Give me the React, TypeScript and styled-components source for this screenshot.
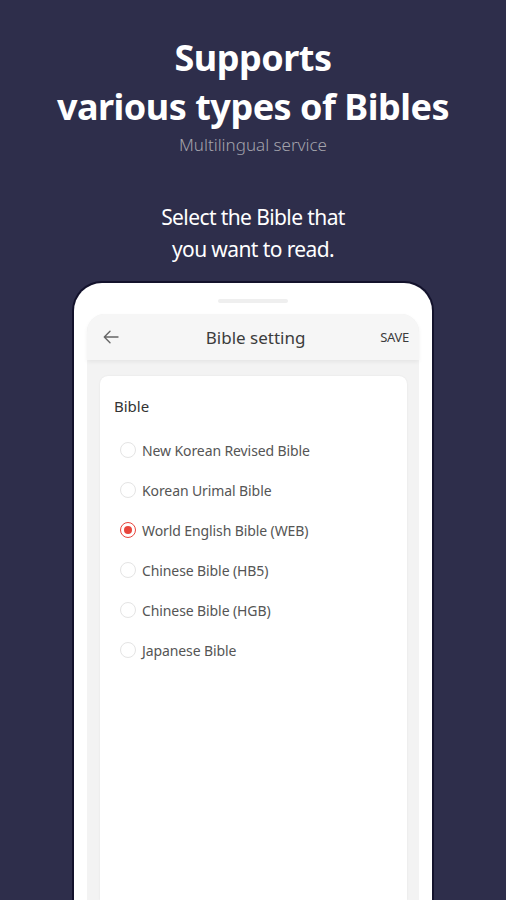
import React from 'react';
import styled, { createGlobalStyle } from 'styled-components';

const GlobalStyle = createGlobalStyle`
  html, body {
    margin: 0;
    padding: 0;
    background: #2e2e4b;
  }
  * {
    box-sizing: border-box;
  }
`;

const Page = styled.div`
  width: 506px;
  height: 900px;
  overflow: hidden;
  background: #2e2e4b;
  font-family: 'Noto Sans', 'Open Sans', sans-serif;
  display: flex;
  flex-direction: column;
  align-items: center;
`;

const Title = styled.h1`
  margin: 33px 0 0;
  font-size: 36px;
  font-weight: 700;
  line-height: 49px;
  color: #ffffff;
  text-align: center;
  letter-spacing: -0.5px;
`;

const Subtitle = styled.div`
  margin-top: 2px;
  font-size: 17px;
  font-weight: 300;
  color: #a3a3ab;
  line-height: 24px;
`;

const Caption = styled.p`
  margin: 44px 0 0;
  font-size: 21px;
  line-height: 32px;
  color: #ffffff;
  text-align: center;
  letter-spacing: -0.6px;
`;

const Phone = styled.div`
  margin-top: 16px;
  width: 362px;
  flex: 1;
  background: #ffffff;
  border: 2px solid #13122c;
  border-bottom: none;
  border-radius: 30px 30px 0 0;
  padding: 16px 13px 0;
  display: flex;
  flex-direction: column;
`;

const Speaker = styled.div`
  align-self: center;
  width: 70px;
  height: 4px;
  border-radius: 2px;
  background: #efefef;
`;

const Screen = styled.div`
  margin-top: 11px;
  flex: 1;
  background: #f3f3f3;
  border-radius: 18px 18px 0 0;
  display: flex;
  flex-direction: column;
`;

const Header = styled.div`
  height: 46px;
  display: flex;
  align-items: center;
  padding: 0 10px 0 14px;
  background: #f6f6f6;
  border-radius: 18px 18px 0 0;
  box-shadow: 0 2px 4px rgba(0, 0, 0, 0.06);
  position: relative;
  z-index: 1;
`;

const BackButton = styled.div`
  width: 20px;
  height: 20px;
  display: flex;
  align-items: center;
  justify-content: center;
`;

const HeaderTitle = styled.div`
  flex: 1;
  text-align: center;
  font-size: 17px;
  color: #3c3c3c;
  padding-left: 10px;
`;

const SaveButton = styled.div`
  font-size: 13px;
  color: #3c3c3c;
  letter-spacing: -0.3px;
`;

const Body = styled.div`
  flex: 1;
  padding: 16px 12px 0 13px;
  display: flex;
  flex-direction: column;
`;

const Card = styled.div`
  flex: 1;
  background: #ffffff;
  border-radius: 8px 8px 0 0;
  box-shadow: 0 0 2px rgba(0, 0, 0, 0.08);
  padding: 18px 14px 0;
`;

const SectionLabel = styled.div`
  font-size: 15px;
  color: #333333;
  line-height: 24px;
  margin-bottom: 12px;
`;

const OptionList = styled.div`
  display: flex;
  flex-direction: column;
  padding-left: 6px;
`;

const Option = styled.label`
  height: 40px;
  display: flex;
  align-items: center;
  gap: 6px;
  font-size: 14px;
  color: #555555;
  letter-spacing: -0.1px;
`;

const Radio = styled.span<{ $checked: boolean }>`
  width: 16px;
  height: 16px;
  border-radius: 50%;
  border: 1.5px solid ${(p) => (p.$checked ? '#e8453c' : '#e4e4e4')};
  display: flex;
  align-items: center;
  justify-content: center;

  &::after {
    content: '';
    width: 8px;
    height: 8px;
    border-radius: 50%;
    background: ${(p) => (p.$checked ? '#e8453c' : 'transparent')};
  }
`;

const bibles = [
  'New Korean Revised Bible',
  'Korean Urimal Bible',
  'World English Bible (WEB)',
  'Chinese Bible (HB5)',
  'Chinese Bible (HGB)',
  'Japanese Bible',
];

export default function App() {
  const selected = 2;
  return (
    <>
      <GlobalStyle />
      <Page>
        <Title>
          Supports
          <br />
          various types of Bibles
        </Title>
        <Subtitle>Multilingual service</Subtitle>
        <Caption>
          Select the Bible that
          <br />
          you want to read.
        </Caption>
        <Phone>
          <Speaker />
          <Screen>
            <Header>
              <BackButton>
                <svg width="16" height="14" viewBox="0 0 16 14" fill="none">
                  <path d="M15 7H1.5M7 1.2L1.3 7L7 12.8" stroke="#666" strokeWidth="1.4" strokeLinecap="round" strokeLinejoin="round" />
                </svg>
              </BackButton>
              <HeaderTitle>Bible setting</HeaderTitle>
              <SaveButton>SAVE</SaveButton>
            </Header>
            <Body>
              <Card>
                <SectionLabel>Bible</SectionLabel>
                <OptionList>
                  {bibles.map((name, i) => (
                    <Option key={name}>
                      <Radio $checked={i === selected} />
                      {name}
                    </Option>
                  ))}
                </OptionList>
              </Card>
            </Body>
          </Screen>
        </Phone>
      </Page>
    </>
  );
}
